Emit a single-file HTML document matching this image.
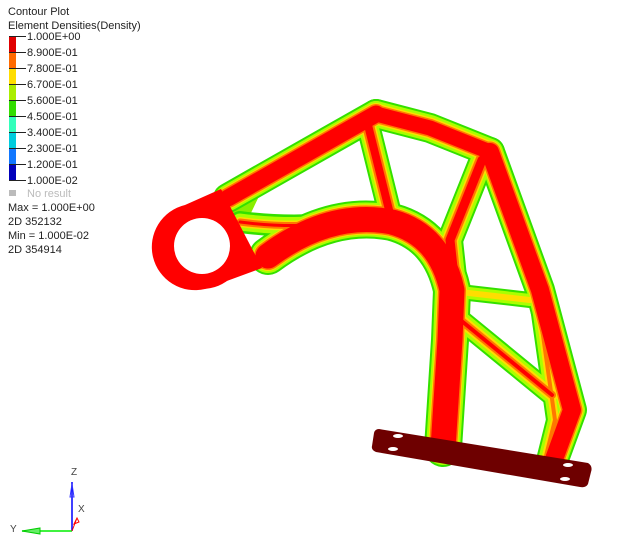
<!DOCTYPE html>
<html><head><meta charset="utf-8"><style>
html,body{margin:0;padding:0;background:#fff;width:619px;height:546px;overflow:hidden}
.t{position:absolute;font-family:"Liberation Sans",sans-serif;font-size:11px;color:#222;line-height:13px;white-space:nowrap}
</style></head><body>
<svg width="619" height="546" style="position:absolute;left:0;top:0">
<defs>
<path id="m1" d="M228,198 L376,114"/>
<path id="m2" d="M376,114 L430,128 L490,152"/>
<path id="m3" d="M490,152 L540,290 L572,410 L553,462"/>
<path id="m4" d="M268,256 Q330,210 392,222 Q440,235 452,290 L450,340 L443,448"/>
<path id="m5" d="M368,125 L392,222"/>
<path id="m6" d="M482,160 L450,240 L456,295"/>
<path id="m7" d="M460,292 L530,300"/>
<path id="m8" d="M458,318 L552,395"/>
<path id="m9" d="M240,222 Q300,230 365,220"/>
<path id="m12" d="M538,300 L555,420 L545,460"/>
</defs>
<path d="M225,196 L262,190 L250,215 L240,240 L262,262 L250,268 Z" fill="#88ee00"/>
<g fill="none" stroke-linecap="round" stroke-linejoin="round">
<g stroke="#33e000">
<use href="#m1" stroke-width="30"/><use href="#m2" stroke-width="30"/><use href="#m3" stroke-width="30"/>
<use href="#m4" stroke-width="38"/><use href="#m5" stroke-width="24"/><use href="#m6" stroke-width="26"/>
<use href="#m7" stroke-width="16"/><use href="#m8" stroke-width="22"/><use href="#m9" stroke-width="22"/>
<use href="#m12" stroke-width="18"/>
</g>
<g stroke="#aaff00">
<use href="#m1" stroke-width="26"/><use href="#m2" stroke-width="26"/><use href="#m3" stroke-width="26"/>
<use href="#m4" stroke-width="34"/><use href="#m5" stroke-width="20"/><use href="#m6" stroke-width="22"/>
<use href="#m7" stroke-width="12"/><use href="#m8" stroke-width="18"/><use href="#m9" stroke-width="17"/>
<use href="#m12" stroke-width="14"/>
</g>
<g stroke="#ffdd00">
<use href="#m1" stroke-width="22"/><use href="#m2" stroke-width="21"/><use href="#m3" stroke-width="23"/>
<use href="#m4" stroke-width="30"/><use href="#m5" stroke-width="15"/><use href="#m6" stroke-width="16"/>
<use href="#m7" stroke-width="6"/><use href="#m8" stroke-width="12"/><use href="#m9" stroke-width="10"/>
<use href="#m12" stroke-width="8"/>
</g>
<g stroke="#ff7700">
<use href="#m1" stroke-width="20"/><use href="#m2" stroke-width="18"/><use href="#m3" stroke-width="21"/>
<use href="#m4" stroke-width="28"/><use href="#m5" stroke-width="12"/><use href="#m6" stroke-width="13"/>
<use href="#m8" stroke-width="8"/><use href="#m9" stroke-width="7"/><use href="#m12" stroke-width="4"/>
</g>
<g stroke="#ff0000">
<use href="#m1" stroke-width="17"/><use href="#m2" stroke-width="15"/><use href="#m3" stroke-width="18"/>
<use href="#m4" stroke-width="25"/><use href="#m5" stroke-width="8"/><use href="#m6" stroke-width="9"/>
<use href="#m8" stroke-width="4"/><use href="#m9" stroke-width="3"/>
</g>
</g>
<!-- boss -->
<path d="M221,189 L262,268 L205,289 A43,43 0 0 1 185,205 Z" fill="#ff0000"/>
<circle cx="202" cy="246" r="43" fill="#ff0000"/>
<circle cx="202" cy="246" r="28" fill="#fff"/>
<!-- base plate -->
<path d="M379,429 L588,463 Q593,466 591,472 L588,484 Q586,488 580,487 L376,452 Q371,450 372,446 L374,433 Q375,429 379,429 Z" fill="#6e0000"/>
<g fill="#fff"><ellipse cx="398" cy="436" rx="5" ry="2"/><ellipse cx="393" cy="449" rx="5" ry="2"/><ellipse cx="568" cy="465" rx="5" ry="2"/><ellipse cx="565" cy="479" rx="5" ry="2"/></g>
<!-- legend bar -->
<rect x="9" y="36" width="7" height="16" fill="#e00000"/>
<rect x="9" y="52" width="7" height="16" fill="#ff6a00"/>
<rect x="9" y="68" width="7" height="16" fill="#ffdd00"/>
<rect x="9" y="84" width="7" height="16" fill="#aaee00"/>
<rect x="9" y="100" width="7" height="16" fill="#33dd00"/>
<rect x="9" y="116" width="7" height="16" fill="#33ffbb"/>
<rect x="9" y="132" width="7" height="16" fill="#00ccdd"/>
<rect x="9" y="148" width="7" height="16" fill="#1177ff"/>
<rect x="9" y="164" width="7" height="16" fill="#0000bb"/>
<g stroke="#222" stroke-width="1">
<line x1="9" y1="36.5" x2="26" y2="36.5"/><line x1="9" y1="52.5" x2="26" y2="52.5"/><line x1="9" y1="68.5" x2="26" y2="68.5"/><line x1="9" y1="84.5" x2="26" y2="84.5"/><line x1="9" y1="100.5" x2="26" y2="100.5"/><line x1="9" y1="116.5" x2="26" y2="116.5"/><line x1="9" y1="132.5" x2="26" y2="132.5"/><line x1="9" y1="148.5" x2="26" y2="148.5"/><line x1="9" y1="164.5" x2="26" y2="164.5"/><line x1="9" y1="180.5" x2="26" y2="180.5"/>
</g>
<rect x="9" y="190" width="7" height="6" fill="#bbb"/>
<!-- axes -->
<line x1="72" y1="531" x2="72" y2="482" stroke="#0000ff" stroke-width="1.5"/>
<path d="M72,484 L70,497 L74,497 Z" fill="none" stroke="#3333ff"/>
<line x1="72" y1="531" x2="22" y2="531" stroke="#00ee00" stroke-width="1.5"/>
<path d="M22,531 L40,528 L40,534 Z" fill="#66ee66" stroke="#00cc00"/>
<path d="M72,531 L77,518 M77,518 L74,524 L79,522 Z" stroke="#ff0000" fill="none"/>
</svg>
<div class="t" style="left:8px;top:6px">Contour Plot</div>
<div class="t" style="left:8px;top:20px">Element Densities(Density)</div>
<div class="t" style="left:27px;top:31px">1.000E+00</div>
<div class="t" style="left:27px;top:47px">8.900E-01</div>
<div class="t" style="left:27px;top:63px">7.800E-01</div>
<div class="t" style="left:27px;top:79px">6.700E-01</div>
<div class="t" style="left:27px;top:95px">5.600E-01</div>
<div class="t" style="left:27px;top:111px">4.500E-01</div>
<div class="t" style="left:27px;top:127px">3.400E-01</div>
<div class="t" style="left:27px;top:143px">2.300E-01</div>
<div class="t" style="left:27px;top:159px">1.200E-01</div>
<div class="t" style="left:27px;top:175px">1.000E-02</div>
<div class="t" style="left:27px;top:188px;color:#bbb">No result</div>
<div class="t" style="left:8px;top:202px">Max = 1.000E+00</div>
<div class="t" style="left:8px;top:216px">2D 352132</div>
<div class="t" style="left:8px;top:230px">Min = 1.000E-02</div>
<div class="t" style="left:8px;top:244px">2D 354914</div>
<div class="t" style="left:71px;top:466px;font-size:10px;color:#444">Z</div>
<div class="t" style="left:78px;top:503px;font-size:10px;color:#444">X</div>
<div class="t" style="left:10px;top:523px;font-size:10px;color:#444">Y</div>
</body></html>
